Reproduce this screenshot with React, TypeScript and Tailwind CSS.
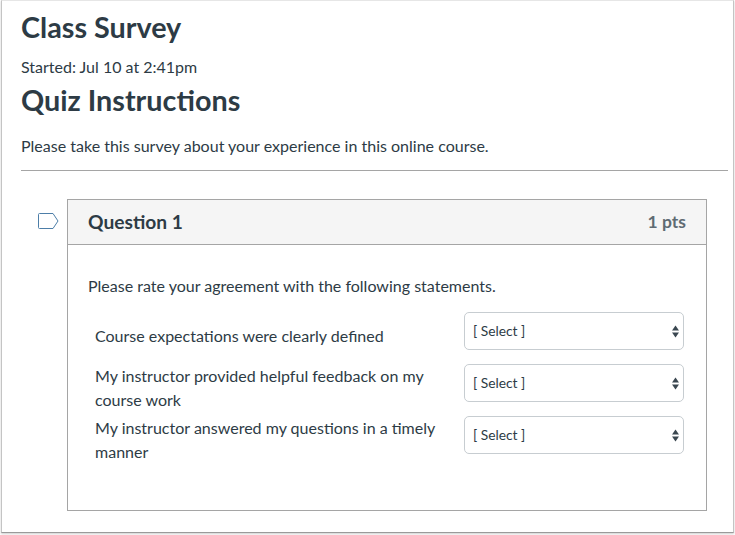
const rows = [
  { label: 'Course expectations were clearly defined', pad: 'pt-[12px]' },
  { label: 'My instructor provided helpful feedback on my course work', pad: '' },
  { label: 'My instructor answered my questions in a timely manner', pad: '' },
]

function SelectBox() {
  return (
    <div className="flex h-[38px] w-[220px] shrink-0 items-center justify-between rounded-[5px] border border-[#c7cdd1] bg-white pl-2 pr-[3px] text-[13.8px] text-[#2d3b45]">
      <span>[ Select ]</span>
      <svg width="9" height="13" viewBox="0 0 9 13" className="fill-[#3a4750]">
        <path d="M4.5 0.5 L8 5.5 H1 Z" />
        <path d="M1 7.5 H8 L4.5 12.5 Z" />
      </svg>
    </div>
  )
}

export default function App() {
  return (
    <div className="h-[535px] w-[735px] overflow-hidden bg-white font-['Lato',sans-serif] text-[#2d3b45]">
      <div className="ml-[1px] h-[533px] w-[733px] border-x border-b border-x-[#c4c4c4] border-b-[#9a9a9a] border-t border-t-[#e6e6e6] pl-[19px] pr-[5px] shadow-[0_1px_2px_rgba(0,0,0,0.2)]">
        <h1 className="pt-[9px] text-[28.75px] font-bold leading-[35px]">Class Survey</h1>
        <p className="mt-[12px] text-[16px] leading-[20px]">Started: Jul 10 at 2:41pm</p>
        <h2 className="mt-[6px] text-[28.75px] font-bold leading-[35px]">Quiz Instructions</h2>
        <p className="mt-[17px] text-[16.03px] leading-[22px]">Please take this survey about your experience in this online course.</p>
        <hr className="mt-[13px] border-t border-[#a5a5a5]" />

        <div className="mt-[28px] flex">
          <div className="flex w-[46px] shrink-0 justify-start pl-[17px] pt-[14px]">
            <svg width="21" height="16" viewBox="0 0 21 16" fill="none" className="stroke-[#4d7ea8]">
              <path d="M1.5 0.5 H15 L20 8 L15 15.5 H1.5 Q0.5 15.5 0.5 14.5 V1.5 Q0.5 0.5 1.5 0.5 Z" strokeWidth="1" />
            </svg>
          </div>
          <section className="h-[312px] w-[640px] border border-[#a5a5a5]">
            <header className="flex h-[45px] items-center justify-between border-b border-[#a5a5a5] bg-[#f5f5f5] px-5">
              <h3 className="text-[19.2px] font-bold">Question 1</h3>
              <span className="text-[17.5px] font-bold text-[#5f6b73]">1 pts</span>
            </header>
            <div className="px-5 pt-[30px]">
              <p className="text-[16.03px] leading-[22px]">Please rate your agreement with the following statements.</p>
              <div className="mt-[15px] flex flex-col gap-[14px]">
                {rows.map(row => (
                  <div key={row.label} className="flex h-[38px] items-start justify-between pl-[7px] pr-[2px]">
                    <p className={`w-[345px] text-[16.03px] leading-[24px] ${row.pad}`}>{row.label}</p>
                    <SelectBox />
                  </div>
                ))}
              </div>
            </div>
          </section>
        </div>
      </div>
    </div>
  )
}
